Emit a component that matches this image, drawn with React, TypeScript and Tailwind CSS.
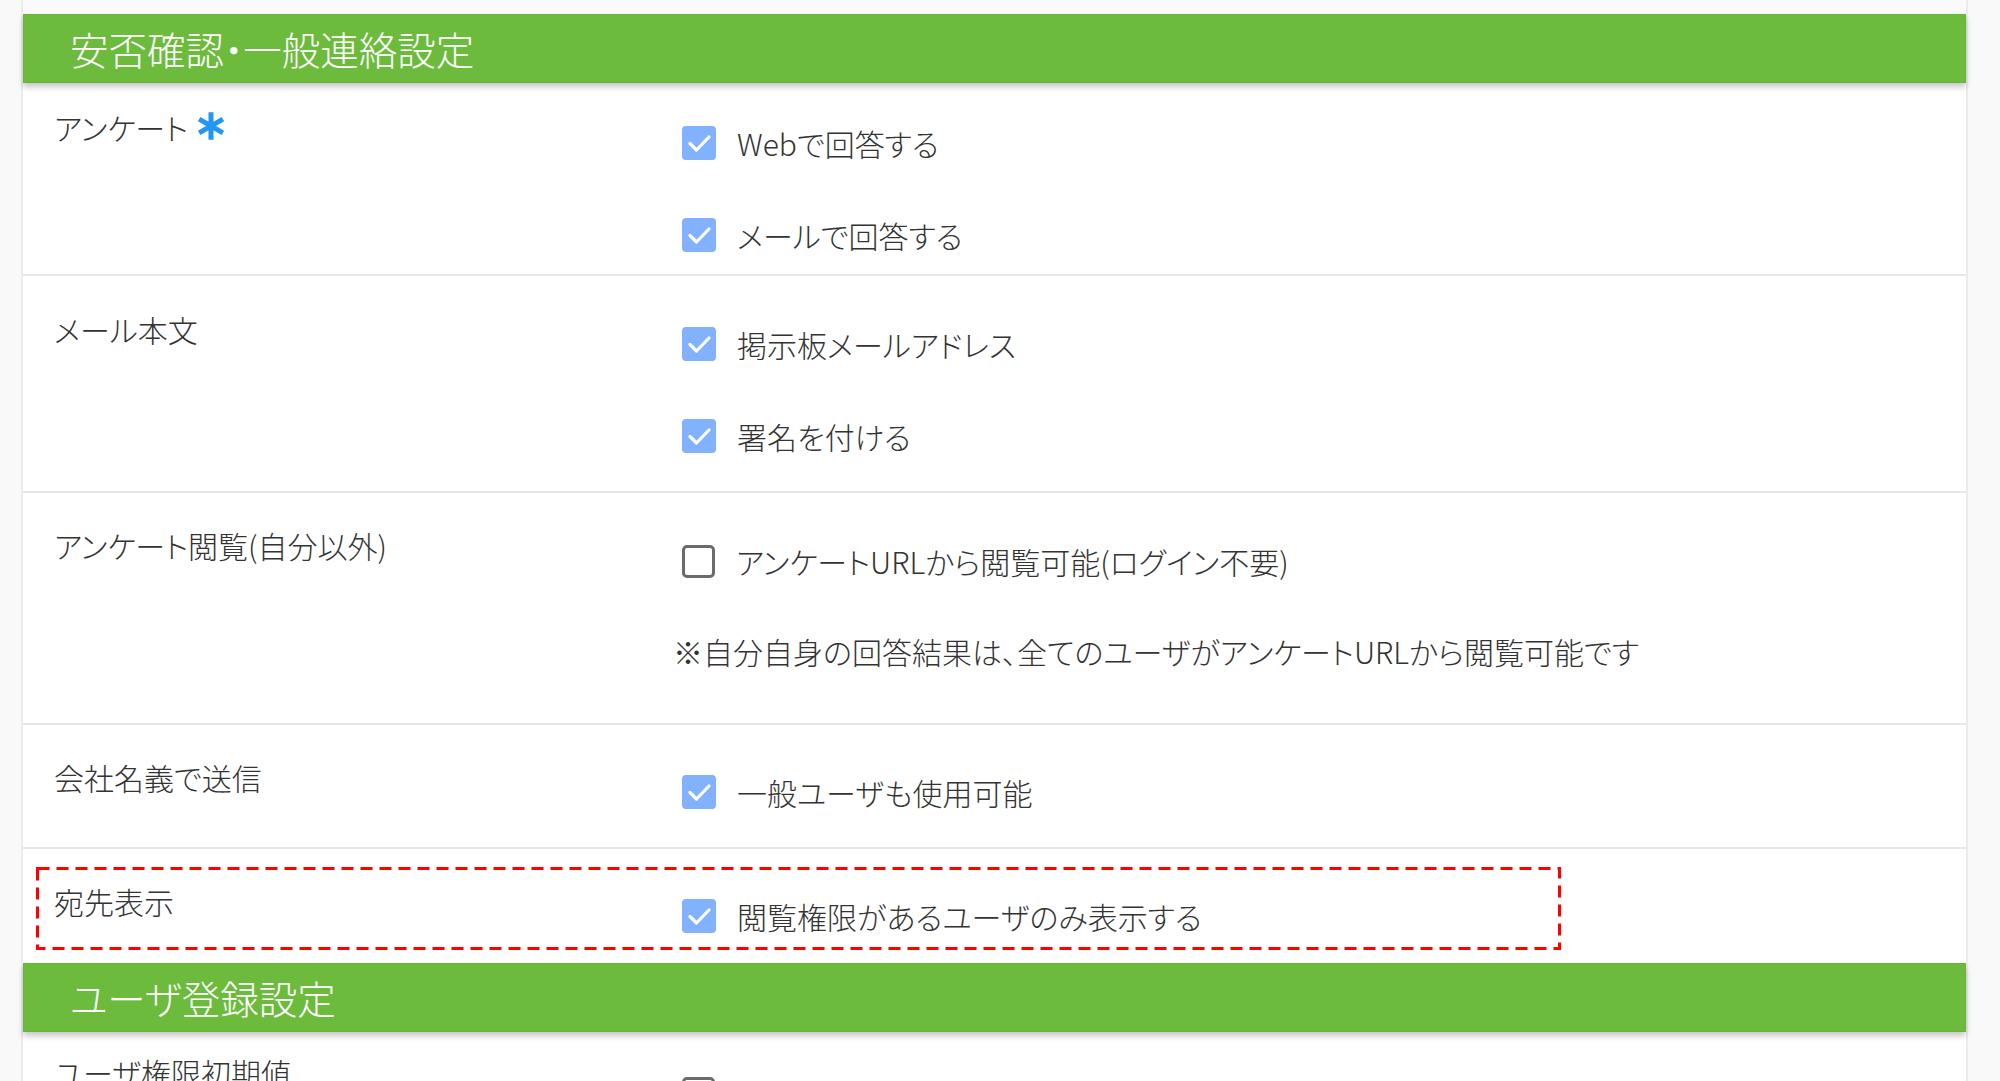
import type { ReactNode } from 'react';

const font = "font-['Noto_Sans_CJK_JP','Noto_Sans',sans-serif] font-light [font-feature-settings:'palt']";

function SectionHeader({ title }: { title: string }) {
  return (
    <div className="relative z-10 h-[69px] bg-[#6cbb3c] border border-[#67b238] shadow-[0_4px_6px_rgba(0,0,0,0.22)] flex items-center pl-[46px]">
      <span className="text-white text-[38.5px] leading-none">{title}</span>
    </div>
  );
}

function Check({ checked }: { checked: boolean }) {
  if (!checked) {
    return (
      <div className="w-[33px] h-[33px] shrink-0 rounded-[5px] border-[3px] border-[#6b6b6b] bg-white" />
    );
  }
  return (
    <div className="w-[34px] h-[34px] shrink-0 rounded-[4px] bg-[#82b1ff] flex items-center justify-center">
      <svg width="34" height="34" viewBox="0 0 34 34" fill="none">
        <path d="M8 17.5 L14.5 24 L27 11" stroke="white" strokeWidth="3.2" strokeLinecap="round" strokeLinejoin="round" />
      </svg>
    </div>
  );
}

function Option({ checked, label }: { checked: boolean; label: string }) {
  return (
    <div className="flex items-center h-[34px] ml-[9px]">
      <Check checked={checked} />
      <span className="ml-[21px] text-[30px] leading-none text-[#333] whitespace-nowrap">{label}</span>
    </div>
  );
}

function Row({
  label,
  children,
  h,
  labelTop,
  optTop,
  last,
  extra,
}: {
  label: ReactNode;
  children: ReactNode;
  h: string;
  labelTop: string;
  optTop: string;
  last?: boolean;
  extra?: ReactNode;
}) {
  return (
    <div className={`relative flex bg-white ${h} ${last ? '' : 'border-b-2 border-[#e8e8e8]'}`}>
      <div className={`w-[650px] shrink-0 pl-[31px] ${labelTop}`}>
        <div className="flex items-center text-[30px] leading-[35px] text-[#333] whitespace-nowrap">{label}</div>
      </div>
      <div className={`flex flex-col ${optTop}`}>{children}</div>
      {extra}
    </div>
  );
}

function Asterisk() {
  return (
    <svg width="30" height="30" viewBox="0 0 24 24" className="ml-[8px] -mt-[4px]">
      <path d="M12 1 V23 M2.5 6.5 L21.5 17.5 M2.5 17.5 L21.5 6.5" stroke="#2196f3" strokeWidth="4" strokeLinecap="butt" />
    </svg>
  );
}

export default function App() {
  return (
    <div className={`h-[1081px] overflow-hidden bg-[#f9f9f9] ${font}`}>
      <div className="ml-[21px] w-[1947px] border-l-2 border-r-2 border-[#ebebeb] h-full bg-[#fafafa]">
        <div className="h-[14px]" />
        <SectionHeader title="安否確認・一般連絡設定" />

        <Row
          h="h-[193px]"
          labelTop="pt-[27px]"
          optTop="pt-[43px] gap-[58px]"
          label={
            <>
              アンケート
              <Asterisk />
            </>
          }
        >
          <Option checked label="Webで回答する" />
          <Option checked label="メールで回答する" />
        </Row>

        <Row h="h-[217px]" labelTop="pt-[36px]" optTop="pt-[51px] gap-[58px]" label="メール本文">
          <Option checked label="掲示板メールアドレス" />
          <Option checked label="署名を付ける" />
        </Row>

        <Row h="h-[232px]" labelTop="pt-[35px]" optTop="pt-[51px]" label="アンケート閲覧(自分以外)">
          <Option checked={false} label="アンケートURLから閲覧可能(ログイン不要)" />
          <p className="mt-[56px] text-[30px] leading-[35px] text-[#333] whitespace-nowrap">
            ※自分自身の回答結果は、全てのユーザがアンケートURLから閲覧可能です
          </p>
        </Row>

        <Row h="h-[124px]" labelTop="pt-[35px]" optTop="pt-[50px]" label="会社名義で送信">
          <Option checked label="一般ユーザも使用可能" />
        </Row>

        <Row
          h="h-[114px]"
          labelTop="pt-[35px]"
          optTop="pt-[50px]"
          last
          label="宛先表示"
          extra={
            <svg className="absolute left-[13px] top-[18px]" width="1525" height="83" viewBox="0 0 1525 83" fill="none">
              <rect x="1.5" y="1.5" width="1522" height="80" stroke="#ff0000" strokeWidth="3" strokeDasharray="12 7" />
            </svg>
          }
        >
          <Option checked label="閲覧権限があるユーザのみ表示する" />
        </Row>

        <SectionHeader title="ユーザ登録設定" />

        <Row h="h-[120px]" labelTop="pt-[23px]" optTop="pt-[44px]" last label="ユーザ権限初期値">
          <Option checked={false} label="ゲストユーザ" />
        </Row>
      </div>
    </div>
  );
}
